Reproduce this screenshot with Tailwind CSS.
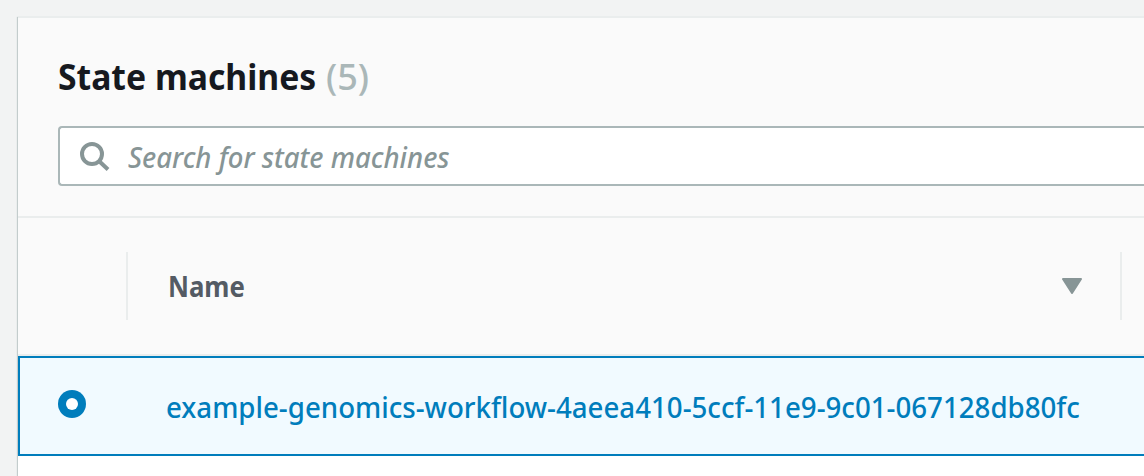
<!DOCTYPE html>
<html lang="en">
<head>
<meta charset="utf-8">
<title>State machines</title>
<script src="https://cdn.jsdelivr.net/npm/@tailwindcss/browser@4"></script>
</head>
<body class="h-[476px] overflow-hidden bg-[#f2f3f3] pl-[18px] pt-4 font-['Noto_Sans',sans-serif]">
<main class="h-[460px] border-t-2 border-[#eaeded] bg-white shadow-[-1px_1px_1px_0_#c3cccc]">
  <header class="h-[200px] border-b-2 border-[#eaeded] bg-[#fafafa] pl-10 pt-[35px]">
    <h1 class="flex h-12 items-center whitespace-nowrap text-[36px] leading-[48px] font-bold text-[#16191f]">
      <span class="w-[268px] origin-left scale-x-[0.936]">State machines</span>
      <span class="font-medium text-[#aab7b8]">(5)</span>
    </h1>
    <div class="mt-[25px] flex h-[60px] items-center rounded-l-[4px] border-2 border-r-0 border-[#aab7b8] bg-white pl-5">
      <svg class="mt-[2px] h-[30px] w-[30px] shrink-0" viewBox="0 0 30 30" fill="none" stroke="#879596" stroke-width="4"><circle cx="12" cy="12" r="10"/><path d="M19 19l9 8.5"/></svg>
      <span class="ml-[18px] mt-[2px] origin-left scale-x-[0.982] whitespace-nowrap text-[28px] leading-[40px] font-medium text-[#879596] italic">Search for state machines</span>
    </div>
  </header>
  <div class="flex h-[138px] items-center border-b-2 border-[#eaeded] bg-[#fafafa]">
    <div class="h-[68px] w-[110px] border-r-2 border-[#eaeded]"></div>
    <div class="flex h-[68px] w-[994px] items-center justify-between border-r-2 border-[#eaeded] pr-[38px] pl-10">
      <span class="origin-left scale-x-[0.92] text-[28px] leading-[40px] font-bold text-[#545b64]">Name</span>
      <svg class="h-4 w-5" viewBox="0 0 20 16" fill="#879596" stroke="#879596" stroke-width="2" stroke-linejoin="round"><path d="M1 1H19L10 15Z"/></svg>
    </div>
  </div>
  <div class="flex h-[100px] items-center border-2 border-r-0 border-[#007dbc] bg-[#f1faff] pl-[38px]">
    <div class="-mt-1 flex size-7 shrink-0 items-center justify-center rounded-full bg-[#007dbc]"><div class="size-3 rounded-full bg-white"></div></div>
    <a class="ml-20 mt-[2px] origin-left scale-x-[0.988] whitespace-nowrap text-[28px] leading-[40px] font-medium text-[#007dbc]">example-genomics-workflow-4aeea410-5ccf-11e9-9c01-067128db80fc</a>
  </div>
</main>
</body>
</html>
